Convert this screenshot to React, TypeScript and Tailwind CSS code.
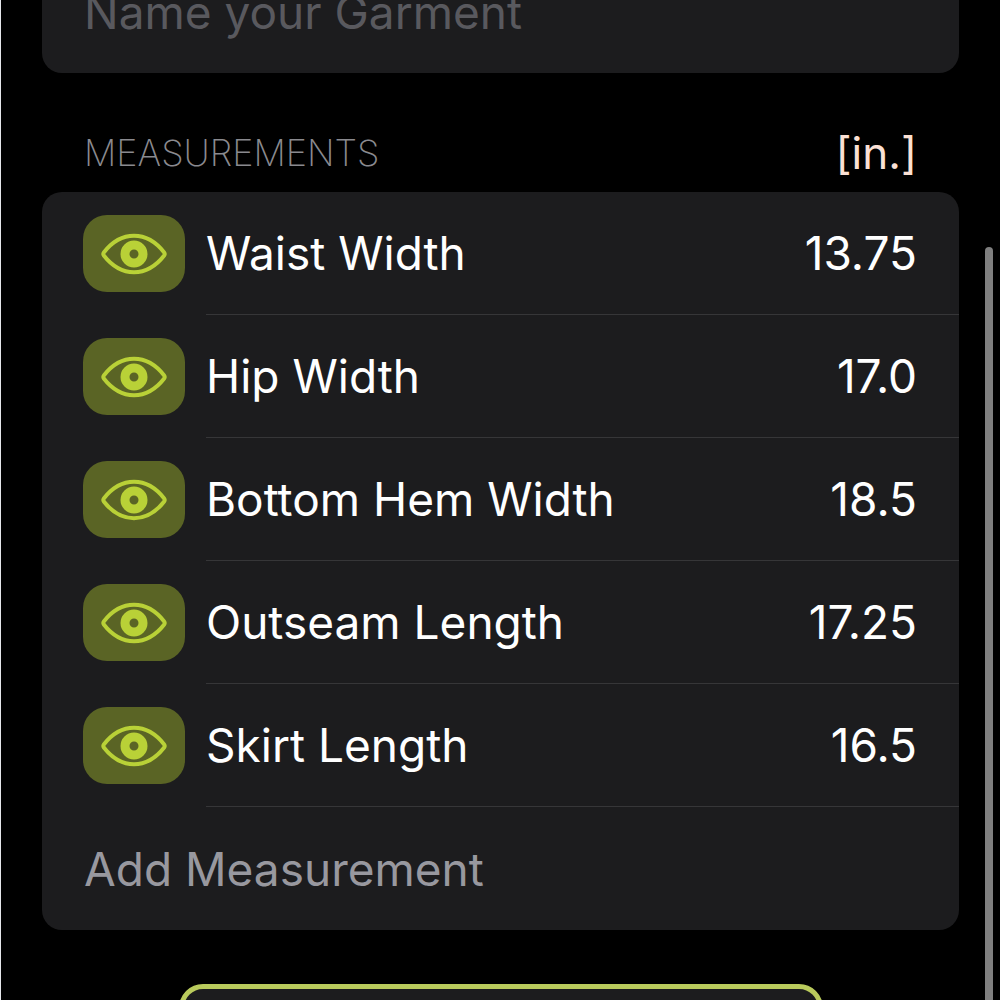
import React, { useState } from 'react';

interface Measurement {
  name: string;
  value: string;
}

const initialMeasurements: Measurement[] = [
  { name: 'Waist Width', value: '13.75' },
  { name: 'Hip Width', value: '17.0' },
  { name: 'Bottom Hem Width', value: '18.5' },
  { name: 'Outseam Length', value: '17.25' },
  { name: 'Skirt Length', value: '16.5' },
];

const EyeIcon: React.FC = () => (
  <svg viewBox="0 0 66 42" className="w-[66px] h-[42px]" fill="none" aria-hidden="true">
    <path
      d="M2.800 19.500C11 9 20.500 2.800 33 2.800s22 6.200 30.200 16.700q1 1.500 0 3C55 33 45.500 39.200 33 39.200S11 33 2.800 22.500q-1-1.500 0-3Z"
      stroke="currentColor"
      strokeWidth="4"
      strokeLinejoin="round"
    />
    <circle cx="33" cy="21" r="9" stroke="currentColor" strokeWidth="9" />
  </svg>
);

const MeasurementRow: React.FC<{ item: Measurement }> = ({ item }) => {
  const [value, setValue] = useState(item.value);
  const [visible, setVisible] = useState(true);

  return (
    <li className="flex items-center pl-[41px]">
      <button
        type="button"
        aria-label={`Toggle ${item.name}`}
        aria-pressed={visible}
        onClick={() => setVisible(!visible)}
        className={`flex h-[77px] w-[102px] shrink-0 items-center justify-center rounded-[24px] bg-[#5a6425] text-[#b9d137] ${visible ? '' : 'opacity-50'}`}
      >
        <EyeIcon />
      </button>
      <label className="ml-[21px] flex h-[123px] min-w-0 flex-1 items-center border-b border-[#363638] pr-[42px]">
        <span className="whitespace-nowrap">{item.name}</span>
        <input
          type="text"
          inputMode="decimal"
          value={value}
          onChange={(e) => setValue(e.target.value)}
          className="min-w-0 flex-1 bg-transparent text-right outline-none"
        />
      </label>
    </li>
  );
};

function App() {
  const [name, setName] = useState('');

  return (
    <div className="h-screen overflow-hidden border-l border-gray-200 bg-black font-[Inter,sans-serif] text-[46px] leading-[56px] text-white">
      <div className="relative px-[41px]">
        <div className="flex h-[73px] items-end rounded-b-[20px] bg-[#1c1c1e] px-[42px] pb-[33px]">
          <input
            type="text"
            aria-label="Name your Garment"
            placeholder="Name your Garment"
            value={name}
            onChange={(e) => setName(e.target.value)}
            className="h-[56px] w-full bg-transparent outline-none placeholder:text-[#59595e]"
          />
        </div>

        <div className="flex h-[119px] items-end justify-between px-[42px] pb-[11px]">
          <h2 className="text-[36px] font-extralight text-[#8a8a8f]">MEASUREMENTS</h2>
          <button type="button" className="text-[44px] text-[#fbe0d4]">[in.]</button>
        </div>

        <section className="overflow-hidden rounded-[20px] bg-[#1c1c1e]">
          <ul>
            {initialMeasurements.map((item) => (
              <MeasurementRow key={item.name} item={item} />
            ))}
          </ul>
          <button type="button" className="block h-[123px] w-full px-[42px] text-left text-[#98989f]">
            Add Measurement
          </button>
        </section>

        <button
          type="button"
          aria-label="Save"
          className="mx-auto mt-[54px] block h-[120px] w-[644px] rounded-[24px] border-[5px] border-[#b9ca5c] bg-[#1c1c1e]"
        />

        {/* Scroll indicator */}
        <div className="absolute top-[247px] right-[7px] h-[800px] w-[8px] rounded-full bg-[#7f7f7f]" />
      </div>
    </div>
  );
}

export default App;
